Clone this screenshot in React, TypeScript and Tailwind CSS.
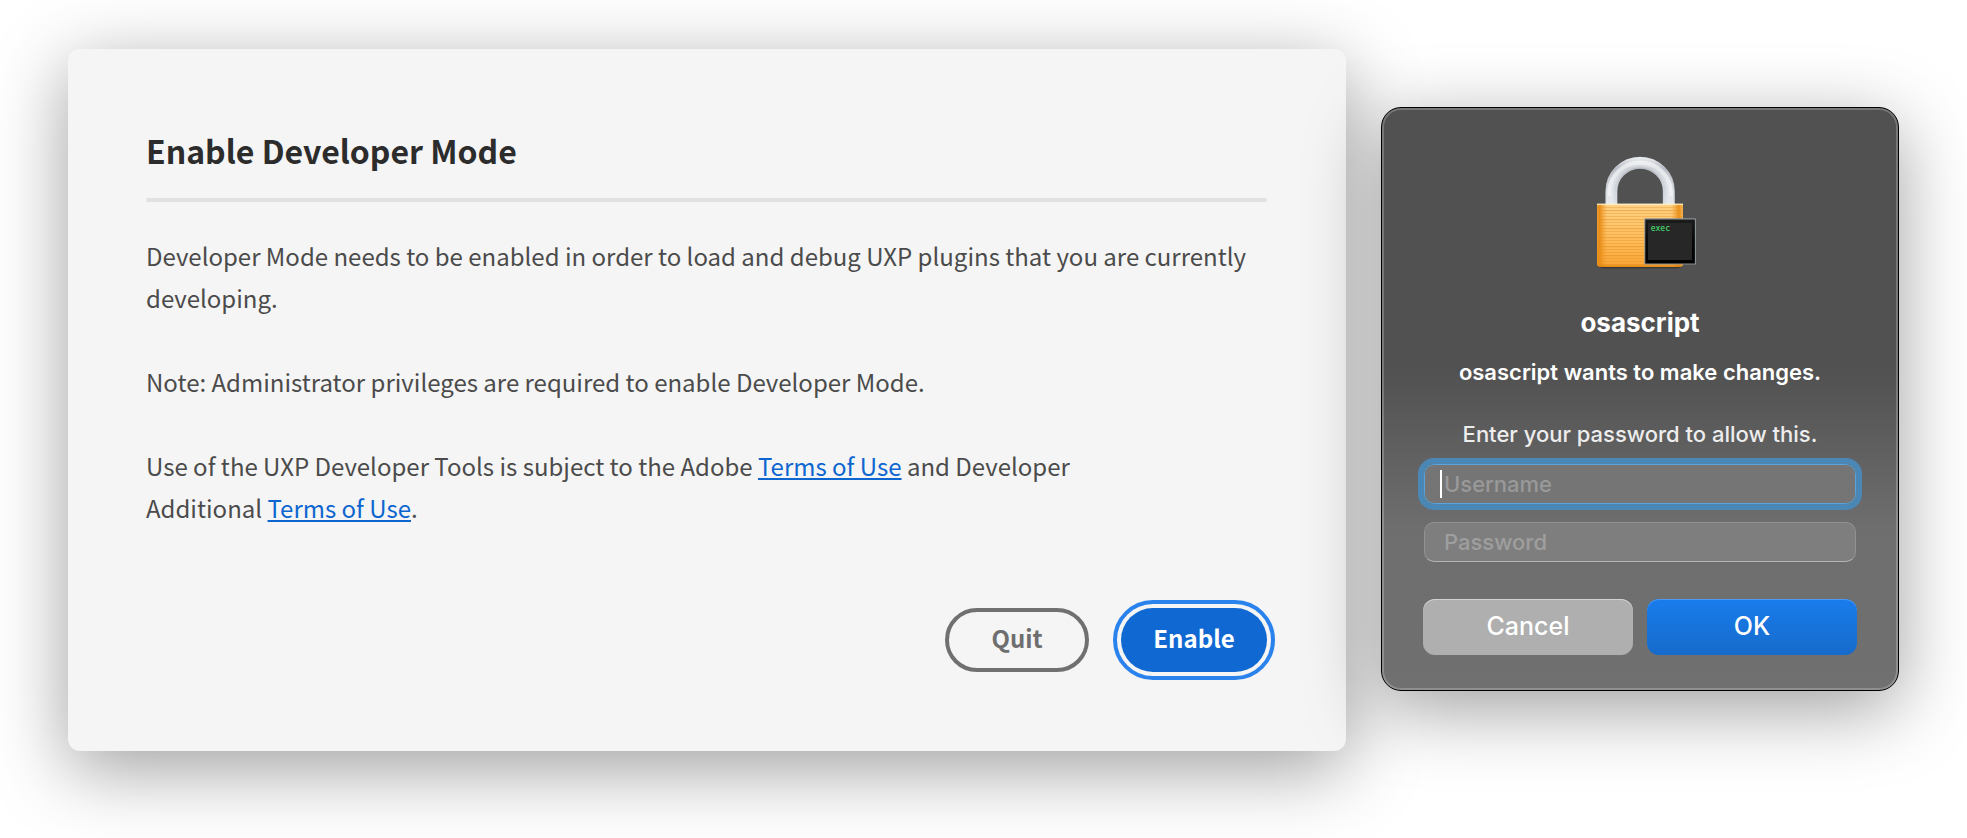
import React from "react";

const grooves = Array.from({ length: 20 }, (_, i) => 61 + i * 3);

function LockIcon() {
  return (
    <svg viewBox="0 0 128 128" className="size-32" role="img" aria-label="Locked">
      <defs>
        <linearGradient id="shackle" x1="0" y1="10" x2="0" y2="58" gradientUnits="userSpaceOnUse">
          <stop offset="0" stopColor="#f2f4f6" />
          <stop offset="0.25" stopColor="#b9bec6" />
          <stop offset="0.55" stopColor="#ccd1d8" />
          <stop offset="1" stopColor="#dcdfe6" />
        </linearGradient>
        <linearGradient id="brass" x1="0" y1="0" x2="0" y2="1">
          <stop offset="0" stopColor="#ffd286" />
          <stop offset="0.5" stopColor="#ffc062" />
          <stop offset="1" stopColor="#faa634" />
        </linearGradient>
        <linearGradient id="brassEdge" x1="0" y1="0" x2="1" y2="0">
          <stop offset="0" stopColor="#e68a14" stopOpacity="0.7" />
          <stop offset="0.03" stopColor="#e68a14" stopOpacity="0.95" />
          <stop offset="0.12" stopColor="#f09a28" stopOpacity="0" />
          <stop offset="0.86" stopColor="#f09a28" stopOpacity="0" />
          <stop offset="0.95" stopColor="#e68a14" stopOpacity="0.9" />
          <stop offset="1" stopColor="#f0a030" stopOpacity="0.6" />
        </linearGradient>
        <linearGradient id="bezel" x1="0" y1="0" x2="0" y2="1">
          <stop offset="0" stopColor="#1c1c1c" />
          <stop offset="0.5" stopColor="#080808" />
          <stop offset="1" stopColor="#000000" />
        </linearGradient>
      </defs>
      <path d="M35.4 58V45.4a28.7 28.7 0 0 1 57.4 0V58" fill="none" stroke="#b4b9c0" strokeWidth="12" />
      <path d="M35.4 58V45.4a28.7 28.7 0 0 1 57.4 0V58" fill="none" stroke="url(#shackle)" strokeWidth="11.2" />
      <path d="M34.4 58V45.2a29.8 29.8 0 0 1 59.4 0V58" fill="none" stroke="#ffffff" strokeOpacity="0.3" strokeWidth="7" />
      <path d="M33.4 50V45a30.8 30.8 0 0 1 61.4 0V50" fill="none" stroke="#ffffff" strokeOpacity="0.45" strokeWidth="4" />
      <path d="M22 119h84v1.500q-2 2-6 2H28q-4 0-6-2z" fill="#3a3a3a" />
      <path d="M21 58h86v60q0 3-5 3H26q-5 0-5-3z" fill="url(#brass)" />
      {grooves.map((y, i) => (
        <rect key={y} x="21" y={y} width="86" height={i % 3 === 1 ? 1.2 : 0.7} fill="#d98416" fillOpacity="0.42" />
      ))}
      <path d="M21 58h86v60q0 3-5 3H26q-5 0-5-3z" fill="url(#brassEdge)" />
      <rect x="21" y="57.600" width="86" height="1.200" fill="#fff3cf" />
      <path d="M22 119.500q2 1.500 5 1.500h74q3 0 5-1.500z" fill="#d67a0a" fillOpacity="0.6" />
      <rect x="68.300" y="72.300" width="51.700" height="46.300" rx="0.800" fill="#8b9295" />
      <rect x="69.300" y="73.500" width="49.600" height="44" fill="url(#bezel)" />
      <rect x="72" y="77" width="44" height="37" fill="#272727" />
      <text x="74.700" y="85" fontSize="8" fill="#4af277" className="font-['DejaVu_Sans_Mono',monospace]">
        exec
      </text>
    </svg>
  );
}

function DeveloperModeDialog() {
  return (
    <section
      aria-labelledby="dev-title"
      className="flex-1 rounded-xl bg-[#f5f5f5] pt-20 pr-[79px] pb-[79px] pl-[78px] font-['Noto_Sans_CJK_SC',sans-serif] shadow-[0_18px_74px_rgba(0,0,0,0.38)]"
    >
      <h1 id="dev-title" className="text-[32px] leading-[42px] font-bold text-[#2c2c2c]">
        Enable Developer Mode
      </h1>
      <hr className="mt-[27px] h-1 rounded-full border-0 bg-[#e1e1e1]" />
      <div className="mt-[33px] flex flex-col gap-[42px] text-[24px] leading-[42px] text-[#4b4b4b]">
        <p>
          Developer Mode needs to be enabled in order to load and debug UXP plugins that you are currently developing.
        </p>
        <p>Note: Administrator privileges are required to enable Developer Mode.</p>
        <p>
          Use of the UXP Developer Tools is subject to the Adobe{" "}
          <a href="#terms" className="text-[#0d66d0] underline decoration-2 underline-offset-2">Terms of Use</a> and Developer
          <br />
          Additional{" "}
          <a href="#additional-terms" className="text-[#0d66d0] underline decoration-2 underline-offset-2">Terms of Use</a>.
        </p>
      </div>
      <div className="mt-[79px] flex justify-end gap-8 text-[24px] leading-8 font-bold">
        <button type="button" className="h-16 w-36 rounded-full border-4 border-[#707070] pb-1 text-[#6e6e6e]">
          Quit
        </button>
        <button
          type="button"
          className="h-16 w-[146px] rounded-full bg-[#1068d2] pb-1 text-white outline-4 outline-offset-4 outline-[#2a82ec]"
        >
          Enable
        </button>
      </div>
    </section>
  );
}

function PasswordDialog() {
  return (
    <form
      aria-labelledby="auth-title"
      className="mt-[58px] flex w-[518px] shrink-0 flex-col items-center rounded-[20px] border border-black bg-linear-to-b from-[#515151] from-45% via-[#6e6e6e] via-72% to-[#707070] px-[41px] pt-[38px] pb-[35px] font-[Inter,sans-serif] text-[22px] leading-7 text-white shadow-[inset_0_0_0_2px_rgba(255,255,255,0.22),0_18px_74px_rgba(0,0,0,0.38)]"
    >
      <LockIcon />
      <h2 id="auth-title" className="mt-[31px] text-[26px] leading-9 font-bold">
        osascript
      </h2>
      <p className="mt-[17px] font-semibold">osascript wants to make changes.</p>
      <p className="mt-[34px] font-medium text-[#ededed]">Enter your password to allow this.</p>
      <div className="mt-4 flex w-full flex-col gap-[18px] px-px">
        <div className="relative">
          <input
            type="text"
            aria-label="Username"
            placeholder="Username"
            className="block h-10 w-full rounded-[10px] border border-[#5ba3d6] bg-[#757575] px-[19px] font-medium outline-6 outline-[#4b87b4] placeholder:text-[#999999]"
          />
          <span aria-hidden="true" className="absolute top-1.5 left-4 h-7 w-0.5 bg-white" />
        </div>
        <input
          type="password"
          aria-label="Password"
          placeholder="Password"
          className="block h-10 w-full rounded-[10px] border border-[#929292] border-b-[#b4b4b4] bg-[#7e7e7e] px-[19px] font-medium outline-none placeholder:text-[#9e9e9e]"
        />
      </div>
      <div className="mt-[37px] grid w-full grid-cols-2 gap-3.5 text-[25px] font-medium">
        <button
          type="button"
          className="h-14 rounded-xl bg-[#afafaf] pb-0.5 shadow-[inset_0_1px_0_#d2d2d2]"
        >
          Cancel
        </button>
        <button
          type="submit"
          className="h-14 rounded-xl bg-linear-to-b from-[#197cec] to-[#166bcb] pb-0.5 shadow-[inset_0_1px_0_#4c9af2]"
        >
          OK
        </button>
      </div>
    </form>
  );
}

export default function App() {
  return (
    <main className="flex min-h-screen items-start gap-[35px] overflow-hidden bg-white px-[68px] pt-[49px]">
      <DeveloperModeDialog />
      <PasswordDialog />
    </main>
  );
}
